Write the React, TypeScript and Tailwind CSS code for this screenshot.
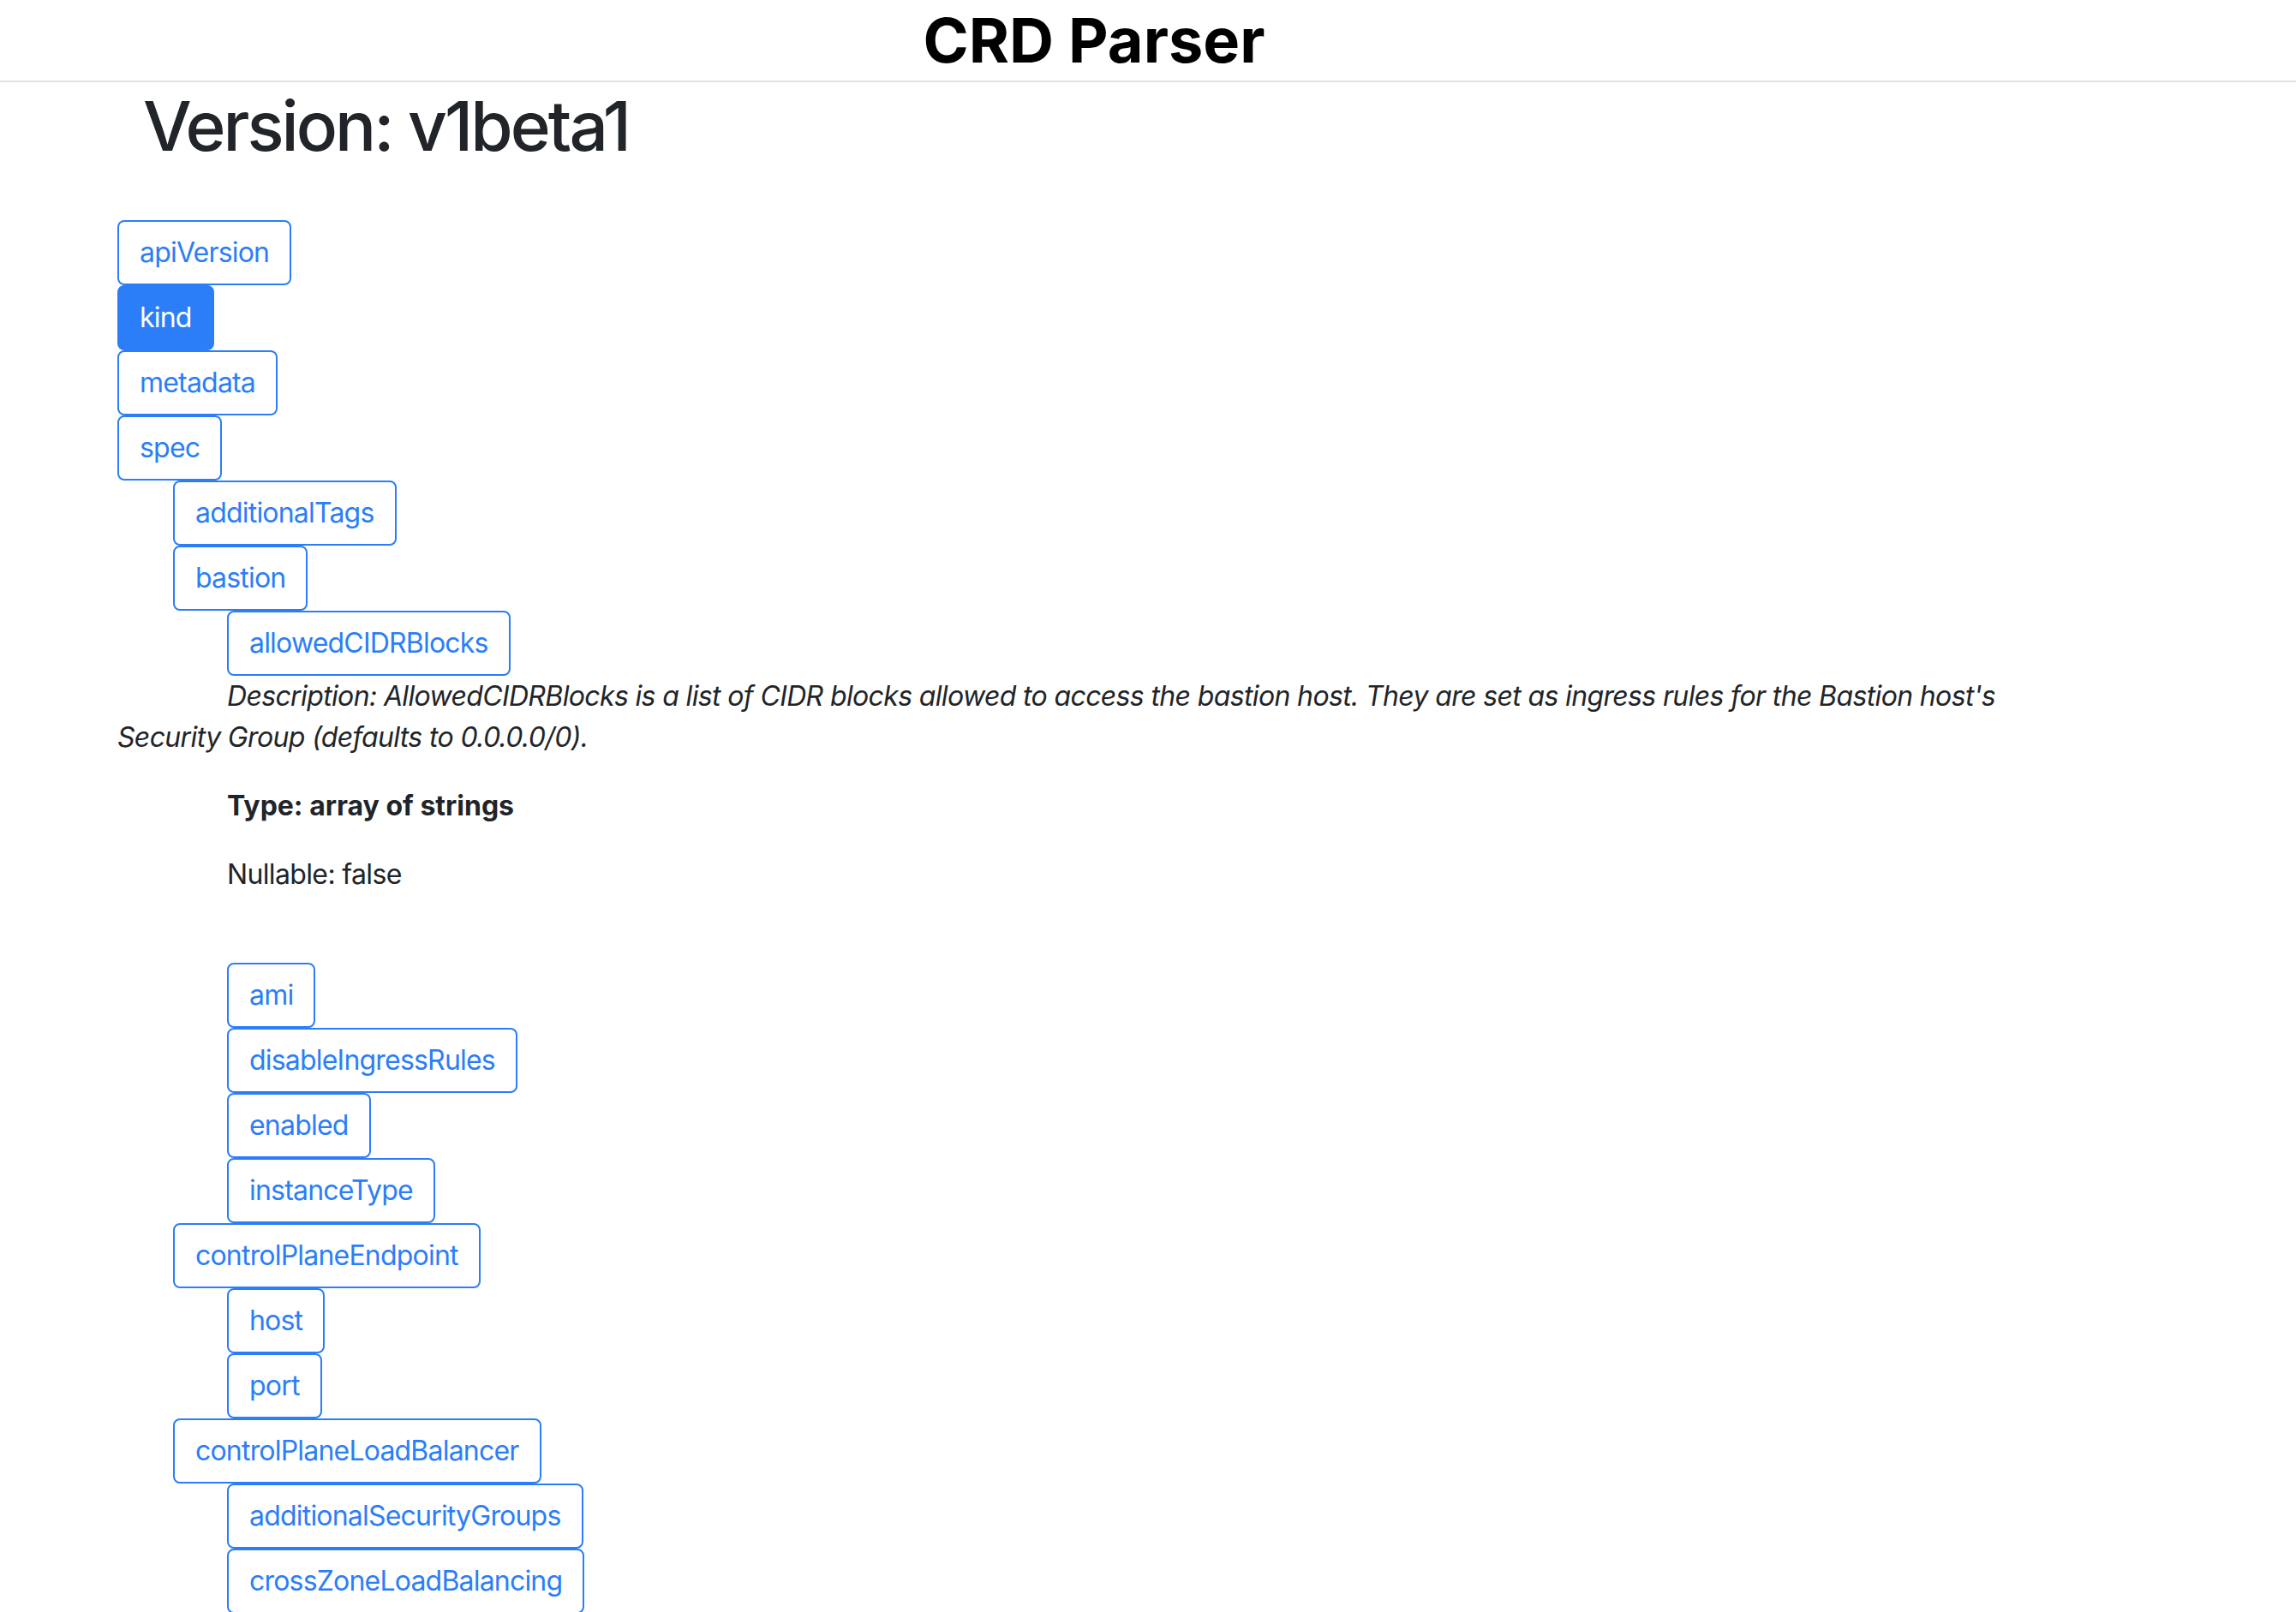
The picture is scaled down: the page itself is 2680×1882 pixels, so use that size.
// CRD PARSER / VERSION VIEW

type Field = {
  name: string
  level: 0 | 1 | 2
  active?: boolean
}

const indent: Record<number, string> = {
  0: "ml-0",
  1: "ml-[65px]",
  2: "ml-[128px]",
}

const topFields: Field[] = [
  { name: "apiVersion", level: 0 },
  { name: "kind", level: 0, active: true },
  { name: "metadata", level: 0 },
  { name: "spec", level: 0 },
  { name: "additionalTags", level: 1 },
  { name: "bastion", level: 1 },
  { name: "allowedCIDRBlocks", level: 2 },
]

const restFields: Field[] = [
  { name: "ami", level: 2 },
  { name: "disableIngressRules", level: 2 },
  { name: "enabled", level: 2 },
  { name: "instanceType", level: 2 },
  { name: "controlPlaneEndpoint", level: 1 },
  { name: "host", level: 2 },
  { name: "port", level: 2 },
  { name: "controlPlaneLoadBalancer", level: 1 },
  { name: "additionalSecurityGroups", level: 2 },
  { name: "crossZoneLoadBalancing", level: 2 },
  { name: "healthCheckProtocol", level: 2 },
  { name: "name", level: 2 },
  { name: "scheme", level: 2 },
]

function FieldButton({ f }: { f: Field }) {
  return (
    <button
      className={
        "box-border rounded-[8px] border-2 border-[#2b7ef8] px-[24px] py-[12px] text-[32px] leading-[48px] tracking-[-0.025em] " +
        indent[f.level] +
        (f.active ? " bg-[#2b7ef8] text-white" : " bg-white text-[#2b7ef8]")
      }
    >
      {f.name}
    </button>
  )
}

export default function App() {
  return (
    <div className="min-h-screen bg-white font-['Inter','Liberation_Sans',sans-serif] text-[#212529]">
      <header className="box-border h-[96px] border-b-2 border-[#dee2e6] pr-[126px] pt-[4px] text-center">
        <h1 className="text-[72px] font-bold leading-[1.2] text-black">CRD Parser</h1>
      </header>

      <main className="pl-[137px]">
        <h2 className="pl-[30px] pt-[3px] text-[80px] font-medium leading-[1.2] tracking-[-0.037em]">
          Version: v1beta1
        </h2>

        <div className="mt-[62px] flex flex-col items-start">
          {topFields.map((f) => (
            <FieldButton key={f.name} f={f} />
          ))}

          <p className="w-[2260px] indent-[128px] text-[32px] italic leading-[48px] tracking-[-0.02em]">
            Description: AllowedCIDRBlocks is a list of CIDR blocks allowed to access the bastion host. They are set as
            ingress rules for the Bastion host's Security Group (defaults to 0.0.0.0/0).
          </p>
          <p className="ml-[128px] mt-[32px] text-[32px] font-bold leading-[48px]">Type: array of strings</p>
          <p className="ml-[128px] mt-[32px] text-[32px] leading-[48px] tracking-[-0.02em]">Nullable: false</p>

          <div className="mt-[79px] flex flex-col items-start">
            {restFields.map((f) => (
              <FieldButton key={f.name} f={f} />
            ))}
          </div>
        </div>
      </main>
    </div>
  )
}
